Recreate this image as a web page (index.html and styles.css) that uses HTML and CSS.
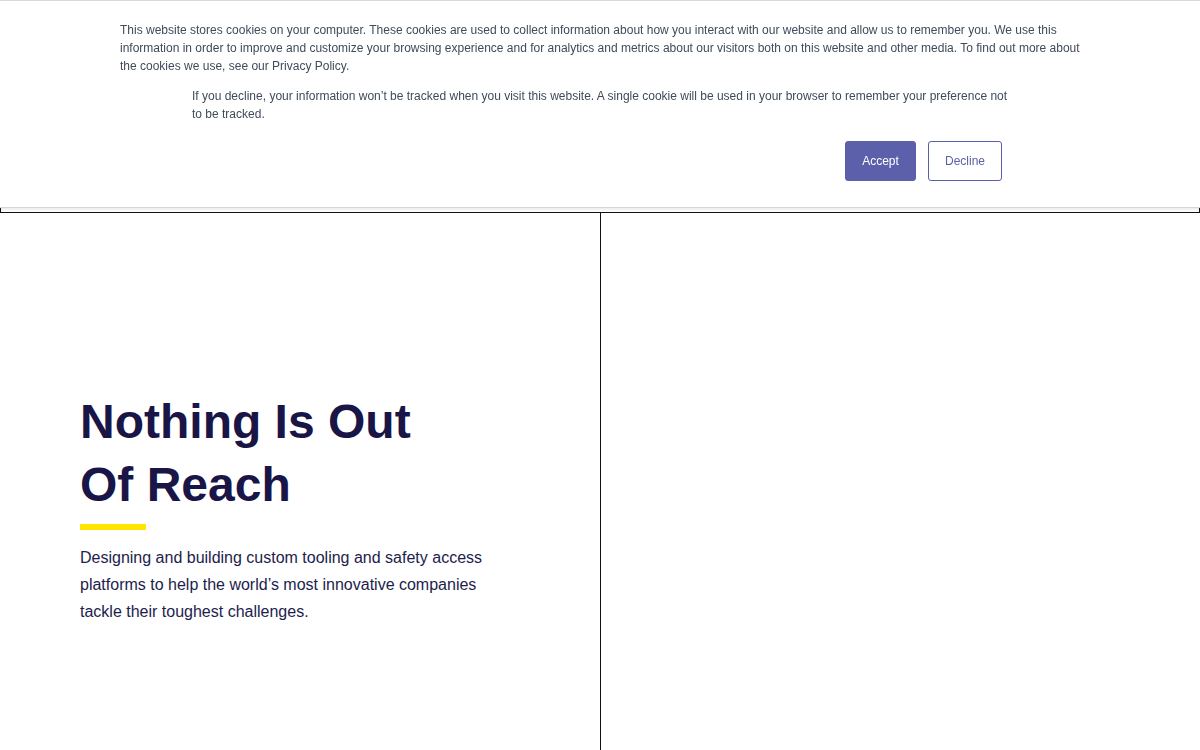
FILE: index.html
```html
<!DOCTYPE html>
<html lang="en">
<head>
<meta charset="utf-8">
<title>Nothing Is Out Of Reach</title>
<link rel="stylesheet" href="styles.css">
</head>
<body>
<header class="site-header"></header>
<main class="hero">
  <section class="hero-left">
    <h1 class="hero-title">Nothing Is Out<br>Of Reach</h1>
    <div class="hero-bar"></div>
    <p class="hero-text">Designing and building custom tooling and safety access platforms to help the world’s most innovative companies tackle their toughest challenges.</p>
  </section>
  <section class="hero-right"></section>
</main>
<div class="cookie-banner">
  <div class="cookie-inner">
    <p class="cookie-main">This website stores cookies on your computer. These cookies are used to collect information about how you interact with our website and allow us to remember you. We use this information in order to improve and customize your browsing experience and for analytics and metrics about our visitors both on this website and other media. To find out more about the cookies we use, see our Privacy Policy.</p>
    <p class="cookie-sub">If you decline, your information won’t be tracked when you visit this website. A single cookie will be used in your browser to remember your preference not to be tracked.</p>
    <div class="cookie-actions">
      <button class="btn btn-accept">Accept</button>
      <button class="btn btn-decline">Decline</button>
    </div>
  </div>
</div>
</body>
</html>
```
FILE: styles.css
```css
html, body {
  margin: 0;
  padding: 0;
  background: #fff;
  font-family: "Liberation Sans", Arial, sans-serif;
  overflow: hidden;
}

.site-header {
  height: 213px;
  box-sizing: border-box;
  border: 1px solid #111;
}

.hero {
  display: grid;
  grid-template-columns: 601px 1fr;
  height: 537px;
}

.hero-left {
  border-right: 1px solid #111;
  padding: 177px 80px 0 80px;
}

.hero-title {
  margin: 0;
  font-size: 48px;
  line-height: 63px;
  font-weight: 700;
  color: #1a1547;
}

.hero-bar {
  width: 66px;
  height: 6px;
  background: #ffe500;
  margin-top: 8px;
}

.hero-text {
  margin: 14px 0 0;
  width: 420px;
  font-size: 16px;
  line-height: 27px;
  color: #221d4c;
}

.cookie-banner {
  position: fixed;
  top: 0;
  left: 0;
  right: 0;
  height: 208px;
  box-sizing: border-box;
  background: #fff;
  border-top: 1px solid #d9d9d9;
  border-bottom: 1px solid #d6d6d6;
  box-shadow: 0 2px 2px rgba(0, 0, 0, 0.07);
}

.cookie-inner {
  width: 960px;
  margin: 0 auto;
  padding-top: 20px;
}

.cookie-main {
  margin: 0;
  font-size: 12px;
  line-height: 18px;
  color: #3f4b5b;
}

.cookie-sub {
  margin: 12px 72px 0;
  font-size: 12px;
  line-height: 18px;
  color: #3f4b5b;
}

.cookie-actions {
  display: flex;
  justify-content: flex-end;
  gap: 12px;
  margin: 18px 78px 0 0;
}

.btn {
  height: 40px;
  box-sizing: border-box;
  border-radius: 3px;
  font-family: "Liberation Sans", Arial, sans-serif;
  font-size: 12px;
  cursor: pointer;
}

.btn-accept {
  width: 71px;
  background: #5c5fa9;
  border: 1px solid #5c5fa9;
  color: #fff;
}

.btn-decline {
  width: 74px;
  background: #fff;
  border: 1px solid #5c5fa9;
  color: #5c5fa9;
}
```
